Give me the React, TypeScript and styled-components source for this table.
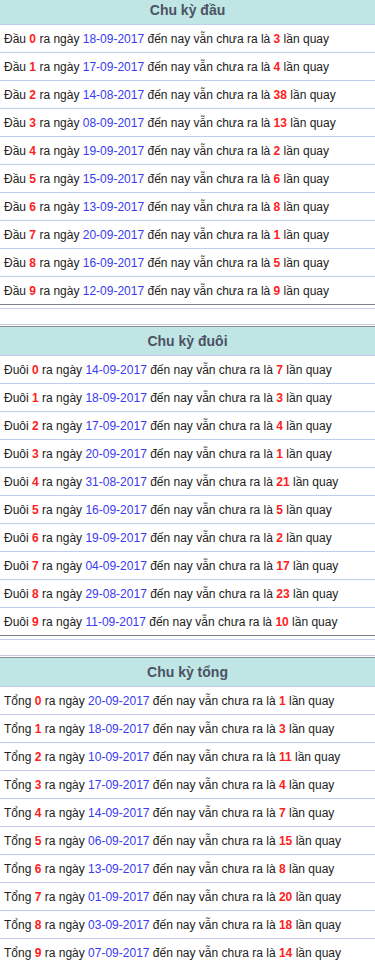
import styled, { createGlobalStyle } from "styled-components";

type Item = { n: number; date: string; count: number };

const SECTIONS: { title: string; label: string; items: Item[] }[] = [
  {
    title: "Chu kỳ đầu",
    label: "Đầu",
    items: [
      { n: 0, date: "18-09-2017", count: 3 },
      { n: 1, date: "17-09-2017", count: 4 },
      { n: 2, date: "14-08-2017", count: 38 },
      { n: 3, date: "08-09-2017", count: 13 },
      { n: 4, date: "19-09-2017", count: 2 },
      { n: 5, date: "15-09-2017", count: 6 },
      { n: 6, date: "13-09-2017", count: 8 },
      { n: 7, date: "20-09-2017", count: 1 },
      { n: 8, date: "16-09-2017", count: 5 },
      { n: 9, date: "12-09-2017", count: 9 },
    ],
  },
  {
    title: "Chu kỳ đuôi",
    label: "Đuôi",
    items: [
      { n: 0, date: "14-09-2017", count: 7 },
      { n: 1, date: "18-09-2017", count: 3 },
      { n: 2, date: "17-09-2017", count: 4 },
      { n: 3, date: "20-09-2017", count: 1 },
      { n: 4, date: "31-08-2017", count: 21 },
      { n: 5, date: "16-09-2017", count: 5 },
      { n: 6, date: "19-09-2017", count: 2 },
      { n: 7, date: "04-09-2017", count: 17 },
      { n: 8, date: "29-08-2017", count: 23 },
      { n: 9, date: "11-09-2017", count: 10 },
    ],
  },
  {
    title: "Chu kỳ tổng",
    label: "Tổng",
    items: [
      { n: 0, date: "20-09-2017", count: 1 },
      { n: 1, date: "18-09-2017", count: 3 },
      { n: 2, date: "10-09-2017", count: 11 },
      { n: 3, date: "17-09-2017", count: 4 },
      { n: 4, date: "14-09-2017", count: 7 },
      { n: 5, date: "06-09-2017", count: 15 },
      { n: 6, date: "13-09-2017", count: 8 },
      { n: 7, date: "01-09-2017", count: 20 },
      { n: 8, date: "03-09-2017", count: 18 },
      { n: 9, date: "07-09-2017", count: 14 },
    ],
  },
];

const GlobalStyle = createGlobalStyle`
  html, body {
    margin: 0;
    padding: 0;
    background: #fff;
  }
  body {
    font-family: Arial, "Liberation Sans", sans-serif;
    color: #222;
  }
`;

const Page = styled.div`
  margin-top: -4px;
  width: 375px;
`;

const Section = styled.section`
  display: flex;
  flex-direction: column;
  border-bottom: 1px solid #7e808c;
`;

const Header = styled.div`
  height: 27px;
  padding-top: 1px;
  line-height: 27px;
  text-align: center;
  background: #bfe6e4;
  color: #4c5263;
  font-size: 14px;
  font-weight: bold;
`;

const Row = styled.div`
  height: 26px;
  padding-top: 1px;
  line-height: 27px;
  border-top: 1px solid #c3ccef;
  padding-left: 4px;
  font-size: 12px;
  white-space: nowrap;
  overflow: hidden;
`;

const Hot = styled.b`
  color: #ff2020;
`;

const DateText = styled.span`
  color: #3a3af0;
`;

const Divider = styled.div`
  margin: 3px 0 1px;
  height: 15px;
  border-top: 1px solid #c5cdf0;
  border-bottom: 1px solid #c6c6dc;
  & + section {
    border-top: 1px solid #8a8c98;
  }
`;

export default function App() {
  return (
    <Page>
      <GlobalStyle />
      {SECTIONS.map((s, i) => (
        <div key={s.title}>
          {i > 0 && <Divider />}
          <Section>
            <Header>{s.title}</Header>
            {s.items.map((it) => (
              <Row key={it.n}>
                {s.label} <Hot>{it.n}</Hot> ra ngày <DateText>{it.date}</DateText> đến nay vẫn
                chưa ra là <Hot>{it.count}</Hot> lần quay
              </Row>
            ))}
          </Section>
        </div>
      ))}
    </Page>
  );
}
